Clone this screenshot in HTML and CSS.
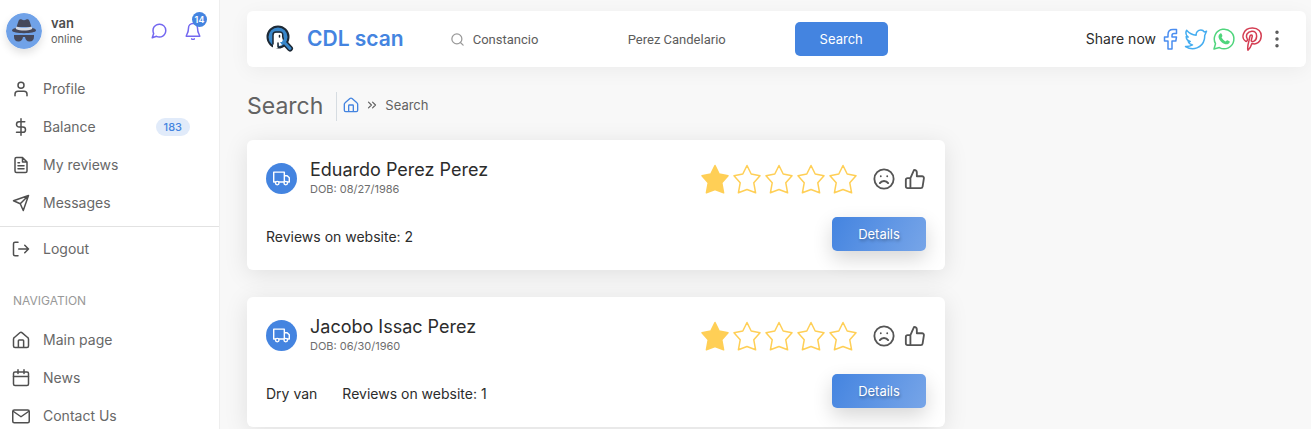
FILE: index.html
```html
<!DOCTYPE html>
<html lang="en">
<head>
  <meta charset="UTF-8">
  <meta name="viewport" content="width=device-width, initial-scale=1">
  <title>CDL scan - Search</title>
  <link rel="stylesheet" href="styles.css">
</head>
<body>

  <!-- icon set -->
  <svg class="sprite" aria-hidden="true">
    <symbol id="i-user" viewBox="0 0 24 24"><path d="M20 21v-2a4 4 0 0 0-4-4H8a4 4 0 0 0-4 4v2"/><circle cx="12" cy="7" r="4"/></symbol>
    <symbol id="i-dollar" viewBox="0 0 24 24"><path d="M12 1v22M17 5H9.500a3.500 3.500 0 0 0 0 7h5a3.500 3.500 0 0 1 0 7H6"/></symbol>
    <symbol id="i-file" viewBox="0 0 24 24"><path d="M14 2H6a2 2 0 0 0-2 2v16a2 2 0 0 0 2 2h12a2 2 0 0 0 2-2V8zM14 2v6h6M16 13H8M16 17H8M10 9H8"/></symbol>
    <symbol id="i-send" viewBox="0 0 24 24"><path d="M22 2L11 13M22 2l-7 20-4-9-9-4z"/></symbol>
    <symbol id="i-logout" viewBox="0 0 24 24"><path d="M8 3H4a2 2 0 0 0-2 2v14a2 2 0 0 0 2 2h4M17 17l5-5-5-5M22 12H9"/></symbol>
    <symbol id="i-home" viewBox="0 0 24 24"><path d="M2 11a3 3 0 0 1 1.200-2.400l7.200-6.200a2.500 2.500 0 0 1 3.200 0l7.200 6.200A3 3 0 0 1 22 11v9a2 2 0 0 1-2 2H4a2 2 0 0 1-2-2zM8.500 22v-9a1 1 0 0 1 1-1h5a1 1 0 0 1 1 1v9"/></symbol>
    <symbol id="i-calendar" viewBox="0 0 24 24"><rect x="2" y="4" width="20" height="18" rx="2"/><path d="M16 1v5M8 1v5M2 10h20"/></symbol>
    <symbol id="i-mail" viewBox="0 0 24 24"><rect x="1" y="4" width="22" height="17" rx="2"/><path d="M22 6l-10 7L2 6"/></symbol>
    <symbol id="i-message" viewBox="0 0 24 24"><path d="M21 11.500a8.380 8.380 0 0 1-.9 3.800 8.500 8.500 0 0 1-7.600 4.700 8.380 8.380 0 0 1-3.800-.9L3 21l1.900-5.700a8.380 8.380 0 0 1-.9-3.800 8.500 8.500 0 0 1 4.700-7.600 8.380 8.380 0 0 1 3.800-.9h.5a8.480 8.480 0 0 1 8 8z"/></symbol>
    <symbol id="i-bell" viewBox="0 0 24 24"><path d="M18 8A6 6 0 0 0 6 8c0 7-3 9-3 11h18c0-2-3-4-3-11M13.700 22.500a2 2 0 0 1-3.400 0"/></symbol>
    <symbol id="i-search" viewBox="0 0 24 24"><circle cx="11" cy="11" r="8"/><path d="M21 21l-4.300-4.300"/></symbol>
    <symbol id="i-chevrons" viewBox="0 0 24 24"><path d="M13 17l5-5-5-5M6 17l5-5-5-5"/></symbol>
    <symbol id="i-truck" viewBox="0 0 24 24"><path d="M1 3h15v14H1zM16 8h4l3 3v6h-7z"/><circle class="wheel" cx="6" cy="18.500" r="2.500"/><circle class="wheel" cx="18" cy="18.500" r="2.500"/></symbol>
    <symbol id="i-star" viewBox="0 0 28 30"><path d="M14 1.500l4.200 8.500 8.800 1.800-6.200 7 1.800 10L14 25.500l-8.600 3.300 1.800-10L1 11.800 9.800 10z"/></symbol>
    <symbol id="i-frown" viewBox="0 0 24 24"><circle cx="12" cy="12" r="10.500"/><path d="M16.500 16.500s-1.500-2.300-4.500-2.300-4.500 2.300-4.500 2.300M8.500 9h.01M15.500 9h.01"/></symbol>
    <symbol id="i-thumb" viewBox="0 0 24 24"><path d="M14 9V5a3 3 0 0 0-3-3l-4 9v11h11.300a2 2 0 0 0 2-1.700l1.400-9a2 2 0 0 0-2-2.300zM7 22H4a2 2 0 0 1-2-2v-7a2 2 0 0 1 2-2h3"/></symbol>
    <symbol id="i-more" viewBox="0 0 24 24"><circle cx="12" cy="3" r="1.300"/><circle cx="12" cy="12" r="1.300"/><circle cx="12" cy="21" r="1.300"/></symbol>
    <symbol id="i-facebook" viewBox="0 0 24 24"><path d="M10 22V14H6.500v-4H10V7.500C10 4 11.500 2.500 15 2.500h3.500v4H16c-1.500 0-2 .5-2 2V10h4.500l-.7 4H14v8z"/></symbol>
    <symbol id="i-twitter" viewBox="0 0 24 24"><path d="M22.500 4.200c-.8.4-1.600.6-2.300.7C19.500 3.600 18.300 3 16.900 3c-3 0-4.900 2.200-4.800 5.200C8.500 8 5.200 6.300 2.600 3.300c-1.300 2.700-.5 5.200 1.600 6.800-.7 0-1.300-.2-2-.5.1 2.500 1.700 4.200 4 4.900-.6.2-1.200.2-2 .1.700 1.800 2.200 3 4.300 3.300-2 1.300-4.300 1.800-7 1.700C9 24 18.300 21 20.300 12.500c.3-1.200.4-2.600.4-4z"/></symbol>
    <symbol id="i-whatsapp" viewBox="0 0 24 24"><path d="M2 22l1.500-5.300a9.800 9.800 0 1 1 3.900 3.900z"/><path class="solid" d="M8.300 6.400c.6-.3 1.100-.1 1.300.4l.8 1.900c.2.500-.5 1.100-.9 1.600.9 1.900 2.300 3.300 4.300 4.100.6-.6 1-1.400 1.600-1.200l2 1c.5.200.5.700.2 1.400-.6 1.500-2.500 2.100-4.200 1.600-3.300-1-6.300-4-6.900-7-.2-1.500.6-3.200 1.800-3.800z"/></symbol>
    <symbol id="i-pinterest" viewBox="0 0 24 24"><path d="M8 23.200c-1-2-.3-4.700 1-9.700l1-4.500c.5-1.700 2.600-1.200 2.200.6l-1 4c-.3 1.800 5 1.600 5.400-4 .3-4.300-2.300-5.500-4.800-5.300-4.800.3-6.200 4.500-4.700 7 .8 1.200 0 3.500-1.300 3C.500 11.500 2.800 1.200 12.300 1c6-.1 9.300 3.800 8.900 8.500-.5 5.600-4.800 8.500-9.300 7-.9 2.700-1.500 4.900-3.900 6.700z"/></symbol>
  </svg>

  <div class="layout">
    <aside class="sidebar">
      <div class="account">
        <svg class="avatar" viewBox="0 0 36 36" aria-hidden="true">
          <circle cx="18" cy="18" r="18" fill="#70a2e8"/>
          <path d="M10.500 14l2-6c.5-1.600 2-2 3.300-1.400 1.400.7 3 .7 4.400 0 1.300-.6 2.800-.2 3.300 1.400l2 6z" fill="#46485a"/>
          <path d="M6 17.500c0-1.500 2-2.300 4.500-2.500h15c2.500.2 4.500 1 4.500 2.500 0 3.500-24 3.500-24 0z" fill="#46485a"/>
          <path d="M10.300 13.500c4.500 1.700 10.900 1.700 15.400 0l.5 2.500c-5 2-11.400 2-16.400 0z" fill="#d5d9e3"/>
          <path d="M8 22h20v1.500c0 3.300-1.500 5-4.500 5-2.700 0-4-1.700-4.500-4.500h-2c-.5 2.800-1.800 4.500-4.500 4.500-3 0-4.500-1.700-4.500-5z" fill="#46485a"/>
        </svg>
        <div class="account-text">
          <strong>van</strong>
          <span>online</span>
        </div>
        <a href="#" class="account-icon" aria-label="Chat"><svg><use href="#i-message"/></svg></a>
        <a href="#" class="account-icon" aria-label="Notifications"><svg><use href="#i-bell"/></svg><span class="count">14</span></a>
      </div>

      <nav class="menu">
        <a href="#"><svg><use href="#i-user"/></svg>Profile</a>
        <a href="#"><svg><use href="#i-dollar"/></svg>Balance <span class="pill">183</span></a>
        <a href="#"><svg><use href="#i-file"/></svg>My reviews</a>
        <a href="#"><svg><use href="#i-send"/></svg>Messages</a>
        <hr>
        <a href="#"><svg><use href="#i-logout"/></svg>Logout</a>
        <h6>NAVIGATION</h6>
        <a href="#"><svg><use href="#i-home"/></svg>Main page</a>
        <a href="#"><svg><use href="#i-calendar"/></svg>News</a>
        <a href="#"><svg><use href="#i-mail"/></svg>Contact Us</a>
      </nav>
    </aside>

    <main class="content">
      <header class="navbar">
        <a href="#" class="brand">
          <svg viewBox="0 0 28 28" aria-hidden="true">
            <path d="M18 17l6 6.500" stroke="#1d2935" stroke-width="6"/>
            <circle cx="12" cy="12" r="10.500" fill="#3887cb" stroke="#1d2935" stroke-width="2"/>
            <path d="M18 17l6 6.500" stroke="#3887cb" stroke-width="3"/>
            <path d="M7 25V10c0-1.500 1-2.500 2.500-2.500h4c2.500 0 3.200 1.500 3 4l.8 2.500-1.300 3h-2L16 20l-3 1-1-3v5z" fill="#fff" stroke="none"/>
            <path d="M7 19V10c0-1.700 1.300-3 3-3H14c2.500 0 3 1.800 2.700 4.500l.6 2.500M13.500 10.500v1.500M12 18v4" stroke="#1d2935" stroke-width="1.500"/>
          </svg>
          CDL scan
        </a>
        <form class="search">
          <svg><use href="#i-search"/></svg>
          <input type="text" aria-label="First name" value="Constancio">
          <input type="text" aria-label="Last name" value="Perez Candelario">
          <button type="button">Search</button>
        </form>
        <div class="share">
          <span>Share now</span>
          <a href="#" class="facebook" aria-label="Facebook"><svg><use href="#i-facebook"/></svg></a>
          <a href="#" class="twitter" aria-label="Twitter"><svg><use href="#i-twitter"/></svg></a>
          <a href="#" class="whatsapp" aria-label="WhatsApp"><svg><use href="#i-whatsapp"/></svg></a>
          <a href="#" class="pinterest" aria-label="Pinterest"><svg><use href="#i-pinterest"/></svg></a>
          <button type="button" class="more" aria-label="More"><svg><use href="#i-more"/></svg></button>
        </div>
      </header>

      <div class="page-title">
        <h2>Search</h2>
        <nav class="breadcrumb">
          <a href="#" aria-label="Main page"><svg class="home"><use href="#i-home"/></svg></a>
          <svg class="sep"><use href="#i-chevrons"/></svg>
          <span>Search</span>
        </nav>
      </div>

      <div class="results">
        <div class="list">
          <article class="card">
            <div class="card-top">
              <span class="truck"><svg><use href="#i-truck"/></svg></span>
              <div class="driver">
                <h4>Eduardo Perez Perez</h4>
                <small>DOB: 08/27/1986</small>
              </div>
              <div class="stars">
                <svg class="on"><use href="#i-star"/></svg>
                <svg><use href="#i-star"/></svg>
                <svg><use href="#i-star"/></svg>
                <svg><use href="#i-star"/></svg>
                <svg><use href="#i-star"/></svg>
              </div>
              <div class="votes">
                <button type="button" aria-label="Bad"><svg><use href="#i-frown"/></svg></button>
                <button type="button" aria-label="Good"><svg><use href="#i-thumb"/></svg></button>
              </div>
            </div>
            <div class="card-bottom">
              <span>Reviews on website: 2</span>
              <button type="button" class="details">Details</button>
            </div>
          </article>

          <article class="card">
            <div class="card-top">
              <span class="truck"><svg><use href="#i-truck"/></svg></span>
              <div class="driver">
                <h4>Jacobo Issac Perez</h4>
                <small>DOB: 06/30/1960</small>
              </div>
              <div class="stars">
                <svg class="on"><use href="#i-star"/></svg>
                <svg><use href="#i-star"/></svg>
                <svg><use href="#i-star"/></svg>
                <svg><use href="#i-star"/></svg>
                <svg><use href="#i-star"/></svg>
              </div>
              <div class="votes">
                <button type="button" aria-label="Bad"><svg><use href="#i-frown"/></svg></button>
                <button type="button" aria-label="Good"><svg><use href="#i-thumb"/></svg></button>
              </div>
            </div>
            <div class="card-bottom">
              <span>Dry van</span>
              <span>Reviews on website: 1</span>
              <button type="button" class="details">Details</button>
            </div>
          </article>
        </div>
      </div>
    </main>
  </div>

</body>
</html>
```
FILE: styles.css
```css
* {
  box-sizing: border-box;
}

body {
  margin: 0;
  font-family: Inter, sans-serif;
  font-size: 13px;
  line-height: 20px;
  color: #2c2c2c;
  background-color: #f8f8f8;
}

a {
  color: inherit;
  text-decoration: none;
}

button {
  padding: 0;
  border: none;
  background: none;
  font-family: inherit;
  font-size: 13px;
  cursor: pointer;
}

svg {
  display: block;
  flex: none;
  fill: none;
  stroke: currentColor;
  stroke-width: 2;
  stroke-linecap: round;
  stroke-linejoin: round;
}

.sprite {
  position: absolute;
  width: 0;
  height: 0;
}

.layout {
  display: flex;
  min-height: 100vh;
}

/* sidebar */
.sidebar {
  width: 220px;
  flex: none;
  background-color: #fff;
  border-right: 1px solid #eee;
}

.account {
  display: flex;
  align-items: center;
  height: 61px;
  padding: 0 17px 0 6px;
}

.avatar {
  width: 36px;
  height: 36px;
  stroke: none;
  border-radius: 50%;
  box-shadow: 0 4px 8px rgba(0, 0, 0, 0.12);
}

.account-text {
  display: flex;
  flex-direction: column;
  margin: 0 auto 0 9px;
  line-height: 16px;
  color: #626262;
}

.account-text strong {
  font-weight: 600;
  color: #4d4d4d;
}

.account-text span {
  font-size: 11px;
}

.account-icon {
  position: relative;
  margin-left: 16px;
  color: #7367f0;
}

.account-icon svg {
  width: 18px;
  height: 18px;
}

.count {
  position: absolute;
  top: -10px;
  right: -5px;
  width: 15px;
  height: 15px;
  border-radius: 50%;
  background-color: #4484e0;
  color: #fff;
  font-size: 9px;
  font-weight: 600;
  line-height: 15px;
  text-align: center;
}

.menu {
  padding-top: 9px;
}

.menu a {
  display: flex;
  align-items: center;
  height: 38px;
  padding: 0 29px 0 12px;
  font-size: 14px;
  color: #686868;
}

.menu svg {
  width: 18px;
  height: 18px;
  margin-right: 13px;
  color: #4f4f4f;
}

.pill {
  margin-left: auto;
  padding: 0 8px;
  border-radius: 9px;
  background-color: #e1ebfa;
  color: #4484e0;
  font-size: 11px;
  font-weight: 500;
  line-height: 18px;
}

.menu hr {
  margin: 4px 0 3px;
  border: none;
  border-top: 1px solid #e2e2e2;
}

.menu h6 {
  margin: 23px 0 10px 13px;
  font-size: 12px;
  font-weight: 400;
  line-height: 20px;
  color: #999;
}

/* top bar */
.content {
  flex: 1;
  min-width: 0;
  padding: 11px 5px 2px 27px;
}

.navbar {
  display: flex;
  align-items: center;
  height: 56px;
  padding: 0 20px 0 19px;
  border-radius: 6px;
  background-color: #fff;
  box-shadow: 0 4px 20px rgba(0, 0, 0, 0.05);
}

.brand {
  display: flex;
  align-items: center;
  gap: 13px;
  color: #4484e0;
  font-size: 21px;
  font-weight: 600;
}

.brand svg {
  width: 28px;
  height: 28px;
}

.search {
  display: flex;
  align-items: center;
  margin-left: 46px;
}

.search svg {
  width: 15px;
  height: 15px;
  margin-right: 8px;
  color: #999;
}

.search input {
  width: 155px;
  padding: 0;
  border: none;
  outline: none;
  background: none;
  color: #5c5c5c;
  font-family: Roboto, sans-serif;
  font-size: 13px;
}

.search input + input {
  width: 167px;
}

.search button {
  width: 93px;
  height: 34px;
  border-radius: 5px;
  background-color: #4484e0;
  color: #fff;
}

.share {
  display: flex;
  align-items: center;
  gap: 4px;
  margin-left: auto;
}

.share span {
  font-size: 14px;
}

.share svg {
  width: 24px;
  height: 24px;
  stroke-width: 1.5;
}

.share .facebook {
  color: #4a8df0;
  margin: 0 -2px;
}

.twitter {
  color: #45adf0;
}

.whatsapp {
  color: #4fd57c;
}

.pinterest {
  color: #d43d52;
}

.solid {
  fill: currentColor;
  stroke: none;
}

.share .more svg {
  width: 18px;
  height: 18px;
  color: #555;
  stroke-width: 2;
}

/* title and breadcrumb */
.page-title {
  display: flex;
  align-items: center;
  height: 29px;
  margin: 25px 0 19px;
}

.page-title h2 {
  margin: 0;
  padding-right: 13px;
  border-right: 1px solid #d6dce1;
  color: #636363;
  font-size: 23px;
  font-weight: 400;
  line-height: 29px;
}

.breadcrumb {
  display: flex;
  align-items: center;
  gap: 6px;
  padding: 0 0 3px 6px;
  color: #626262;
}

.breadcrumb .home {
  width: 16px;
  height: 16px;
  color: #4484e0;
}

.breadcrumb .sep {
  width: 14px;
  height: 14px;
}

/* results */
.results {
  display: grid;
  grid-template-columns: 2fr 1fr;
  gap: 12px;
}

.list {
  display: grid;
  gap: 27px;
}

.card {
  height: 130px;
  padding: 18px 19px;
  border-radius: 6px;
  background-color: #fff;
  box-shadow: 0 4px 24px rgba(0, 0, 0, 0.1);
}

.card-top {
  display: flex;
  align-items: center;
  height: 41px;
}

.truck {
  display: flex;
  align-items: center;
  justify-content: center;
  width: 31px;
  height: 31px;
  border-radius: 50%;
  background-color: #4484e0;
  color: #fff;
}

.truck svg {
  width: 17px;
  height: 17px;
}

.wheel {
  fill: #4484e0;
}

.driver {
  margin-left: 13px;
}

.driver h4 {
  margin: 0;
  font-size: 18px;
  font-weight: 400;
  line-height: 21px;
}

.driver small {
  display: block;
  color: #6e6e6e;
  font-size: 11px;
  line-height: 18px;
}

.stars {
  display: flex;
  gap: 4px;
  margin-left: auto;
  color: #ffcf56;
}

.stars svg {
  width: 28px;
  height: 30px;
  stroke-width: 1.5;
}

.stars .on {
  fill: currentColor;
}

.votes {
  display: flex;
  gap: 9px;
  margin-left: 16px;
}

.votes svg {
  width: 22px;
  height: 22px;
  color: #555;
}

.card-bottom {
  display: flex;
  align-items: flex-end;
  gap: 25px;
  margin-top: 18px;
}

.card-bottom span {
  padding-bottom: 4px;
  font-size: 14px;
}

.details {
  width: 94px;
  height: 34px;
  margin-left: auto;
  border-radius: 5px;
  background: linear-gradient(118deg, #4484e0, #77a5e8);
  box-shadow: 0 8px 20px rgba(0, 0, 0, 0.16);
  color: #fff;
  text-shadow: 1px 2px 3px rgba(0, 0, 0, 0.3);
}
```
